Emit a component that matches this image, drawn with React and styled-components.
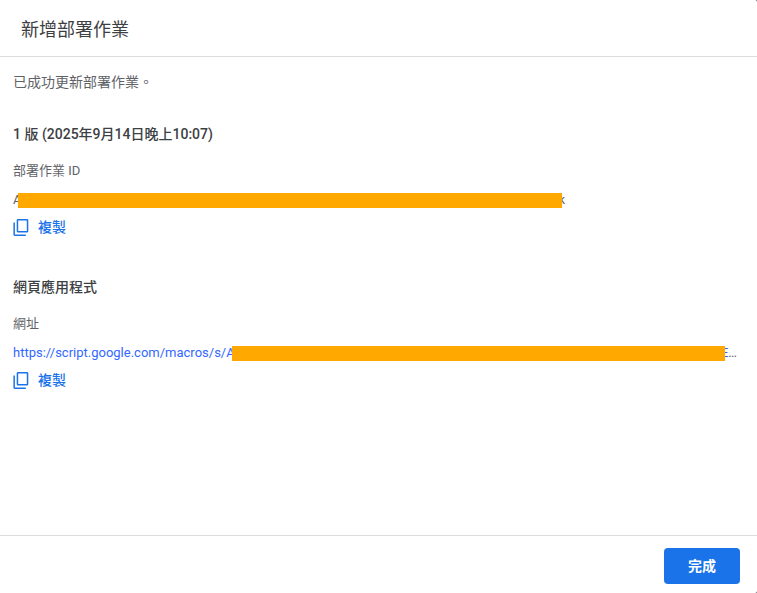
import React from 'react';
import styled, { createGlobalStyle } from 'styled-components';

const App = () => {
   return (
      <>
         <GlobalStyle />
         <StyledDialog role="dialog" aria-labelledby="dialog-title">
            <StyledHeader>
               <h1 id="dialog-title">新增部署作業</h1>
            </StyledHeader>
            <StyledContent>
               <StyledMessage>已成功更新部署作業。</StyledMessage>
               <StyledSection>
                  <StyledHeading>1 版 (2025年9月14日晚上10:07)</StyledHeading>
                  <StyledLabel>部署作業 ID</StyledLabel>
                  <StyledValue>
                     <span>A</span>
                     <StyledRedaction $width="544px" />
                     <span>k</span>
                  </StyledValue>
                  <CopyButton />
               </StyledSection>
               <StyledSection>
                  <StyledHeading>網頁應用程式</StyledHeading>
                  <StyledLabel>網址</StyledLabel>
                  <StyledValue>
                     <StyledLink href="https://script.google.com/macros/s/">
                        <span>https://script.google.com/macros/s/A</span>
                        <StyledRedaction />
                        <span>E</span>
                     </StyledLink>
                     <span>…</span>
                  </StyledValue>
                  <CopyButton />
               </StyledSection>
            </StyledContent>
            <StyledFooter>
               <StyledDone type="button">完成</StyledDone>
            </StyledFooter>
         </StyledDialog>
      </>
   )
}

const CopyButton = () => (
   <StyledCopy type="button">
      <svg width="18" height="18" viewBox="0 0 18 18" fill="currentColor" aria-hidden="true">
         <path fillRule="evenodd" d="M5 1h9a1.300 1.300 0 0 1 1.300 1.300v11A1.300 1.300 0 0 1 14 14.600H5a1.300 1.300 0 0 1-1.300-1.300v-11A1.300 1.300 0 0 1 5 1zm.2 1.500v10.600h8.600V2.500z" />
         <path d="M.4 4.500h1.500v11.900H12.800v1.500H1.700A1.300 1.300 0 0 1 .4 16.600z" />
      </svg>
      複製
   </StyledCopy>
)

const GlobalStyle = createGlobalStyle`
   * {
      box-sizing: border-box;
   }

   body {
      margin: 0;
      background: #5f6368;
      color: #3c4043;
      font-family: Roboto, "Noto Sans CJK TC", sans-serif;
   }

   h1, h2, p {
      margin: 0;
   }

   button {
      border: 0;
      font-family: inherit;
      cursor: pointer;
   }
`;

const StyledDialog = styled.div`
   display: flex;
   flex-direction: column;
   min-height: 100vh;
   background: #fff;
   border-radius: 0 2px 2px 0;
`;

const StyledHeader = styled.header`
   padding: 18px 21px 14px;
   border-bottom: 1px solid #dadce0;

   h1 {
      font-size: 18px;
      font-weight: 400;
      line-height: 24px;
   }
`;

const StyledContent = styled.main`
   flex: 1;
   padding: 15px 20px 16px 13px;
`;

const StyledMessage = styled.p`
   color: #5f6368;
   font-size: 14px;
   line-height: 20px;
`;

const StyledSection = styled.section`
   padding-top: 32px;

   & + & {
      padding-top: 40px;
   }
`;

const StyledHeading = styled.h2`
   font-size: 14px;
   font-weight: 500;
   line-height: 20px;
`;

const StyledLabel = styled.p`
   margin-top: 17px;
   color: #5f6368;
   font-size: 13px;
   line-height: 20px;
`;

const StyledValue = styled.p`
   display: flex;
   margin-top: 9px;
   color: #5f6368;
   font-size: 13px;
   line-height: 20px;
`;

const StyledLink = styled.a`
   display: flex;
   flex: 1;
   color: #3367ff;
   text-decoration: none;
`;

const StyledRedaction = styled.span`
   position: relative;
   z-index: 1;
   flex: ${({ $width }) => $width ? `0 1 ${$width}` : '1'};
   align-self: center;
   height: 15px;
   margin: 0 -4px 0 -3px;
   background: #ffa900;
`;

const StyledCopy = styled.button`
   display: flex;
   align-items: center;
   gap: 7px;
   margin-top: 7px;
   padding: 0;
   background: none;
   color: #1a73e8;
   font-size: 14px;
   font-weight: 500;
   line-height: 20px;
`;

const StyledFooter = styled.footer`
   display: flex;
   justify-content: flex-end;
   padding: 12px 17px 9px;
   border-top: 1px solid #dadce0;
`;

const StyledDone = styled.button`
   height: 36px;
   padding: 0 24px 3px;
   border-radius: 4px;
   background: #1a73e8;
   color: #fff;
   font-size: 14px;
   font-weight: 700;
`;

export default App;
